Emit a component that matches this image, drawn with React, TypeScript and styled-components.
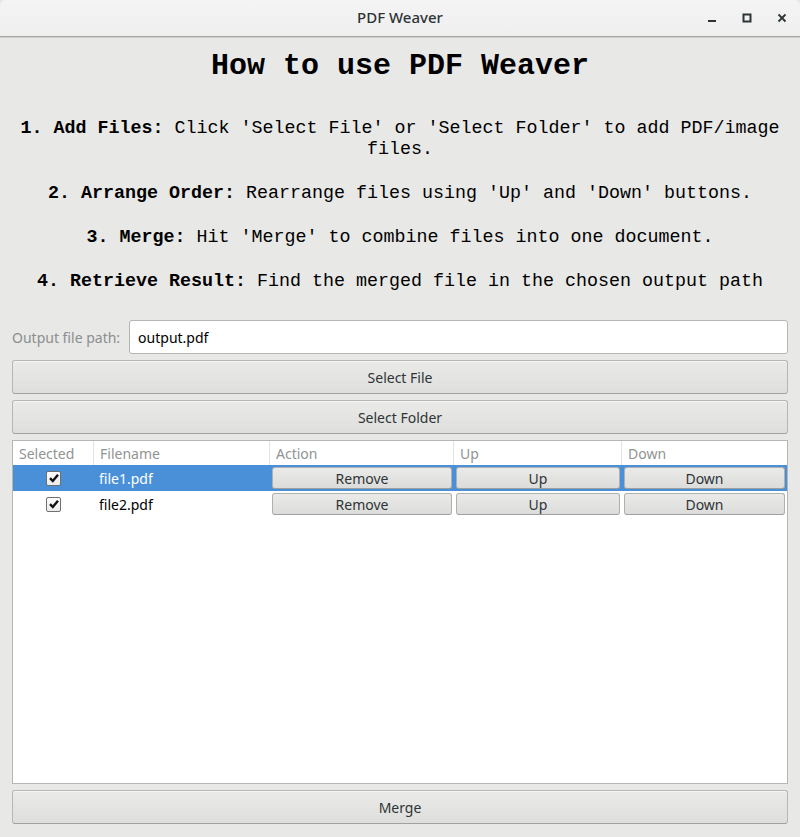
import { useState } from "react";
import styled, { createGlobalStyle } from "styled-components";

const GlobalStyle = createGlobalStyle`
  html, body {
    margin: 0;
    padding: 0;
    background: #e8e8e7;
  }
  * {
    box-sizing: border-box;
  }
`;

const MONO = `"Liberation Mono", "DejaVu Sans Mono", monospace`;
const SANS = `"Noto Sans", "Open Sans", sans-serif`;

interface FileRow {
  name: string;
  checked: boolean;
}

const steps = [
  {
    label: "1. Add Files:",
    text: "Click 'Select File' or 'Select Folder' to add PDF/image files.",
  },
  { label: "2. Arrange Order:", text: "Rearrange files using 'Up' and 'Down' buttons." },
  { label: "3. Merge:", text: "Hit 'Merge' to combine files into one document." },
  {
    label: "4. Retrieve Result:",
    text: "Find the merged file in the chosen output path",
  },
];

export default function App() {
  const [files] = useState<FileRow[]>([
    { name: "file1.pdf", checked: true },
    { name: "file2.pdf", checked: true },
  ]);
  const [selected, setSelected] = useState(0);

  return (
    <>
      <GlobalStyle />
      <Window>
        <TitleBar>
          <TitleText>PDF Weaver</TitleText>
          <Controls>
            <ControlButton aria-label="minimize">
              <svg width="10" height="10" viewBox="0 0 10 10">
                <rect x="1" y="7" width="8" height="2" fill="#2e3436" />
              </svg>
            </ControlButton>
            <ControlButton aria-label="maximize">
              <svg width="10" height="10" viewBox="0 0 10 10">
                <rect x="1.5" y="1.5" width="7" height="7" fill="none" stroke="#2e3436" strokeWidth="2" />
              </svg>
            </ControlButton>
            <ControlButton aria-label="close">
              <svg width="10" height="10" viewBox="0 0 10 10">
                <path d="M1.5 1.5 L8.5 8.5 M8.5 1.5 L1.5 8.5" stroke="#2e3436" strokeWidth="1.8" />
              </svg>
            </ControlButton>
          </Controls>
        </TitleBar>

        <Content>
          <Heading>How to use PDF Weaver</Heading>
          <Steps>
            {steps.map((s) => (
              <Step key={s.label}>
                <b>{s.label}</b> {s.text}
              </Step>
            ))}
          </Steps>

          <Form>
            <OutputRow>
              <Label>Output file path:</Label>
              <TextInput defaultValue="output.pdf" />
            </OutputRow>
            <Button>Select File</Button>
            <Button>Select Folder</Button>

            <Table>
              <HeaderRow>
                <HeadCell>Selected</HeadCell>
                <HeadCell>Filename</HeadCell>
                <HeadCell>Action</HeadCell>
                <HeadCell>Up</HeadCell>
                <HeadCell $last>Down</HeadCell>
              </HeaderRow>
              {files.map((f, i) => (
                <Row key={f.name} $active={i === selected} onClick={() => setSelected(i)}>
                  <CheckCell>
                    <CheckBox>
                      {f.checked && (
                        <svg width="12" height="12" viewBox="0 0 12 12">
                          <path
                            d="M2 6.2 L4.8 9 L10 2.8"
                            fill="none"
                            stroke="#111"
                            strokeWidth="2.4"
                          />
                        </svg>
                      )}
                    </CheckBox>
                  </CheckCell>
                  <NameCell $active={i === selected}>{f.name}</NameCell>
                  <BtnCell>
                    <RowButton>Remove</RowButton>
                  </BtnCell>
                  <BtnCell>
                    <RowButton>Up</RowButton>
                  </BtnCell>
                  <BtnCell>
                    <RowButton>Down</RowButton>
                  </BtnCell>
                </Row>
              ))}
            </Table>

            <Button>Merge</Button>
          </Form>
        </Content>
      </Window>
    </>
  );
}

const Window = styled.div`
  width: 800px;
  height: 837px;
  display: flex;
  flex-direction: column;
  background: #e8e8e7;
  font-family: ${SANS};
  overflow: hidden;
`;

const TitleBar = styled.div`
  position: relative;
  height: 37px;
  flex-shrink: 0;
  display: flex;
  align-items: center;
  justify-content: center;
  background: linear-gradient(#f4f4f4, #efefef);
  border-bottom: 1px solid #a4a4a2;
  box-shadow: 0 1px 0 #cfcfcd;
  border-radius: 6px 6px 0 0;
`;

const TitleText = styled.div`
  font-size: 15px;
  color: #2e3436;
  font-weight: 500;
  margin-top: -2px;
`;

const Controls = styled.div`
  position: absolute;
  right: 6px;
  top: 0;
  height: 36px;
  display: flex;
  align-items: center;
  gap: 11px;
`;

const ControlButton = styled.div`
  width: 24px;
  height: 24px;
  display: flex;
  align-items: center;
  justify-content: center;
`;

const Content = styled.div`
  flex: 1;
  display: flex;
  flex-direction: column;
  padding: 12px 12px 13px;
  min-height: 0;
`;

const Heading = styled.h1`
  margin: 0;
  font-family: ${MONO};
  font-size: 30px;
  font-weight: bold;
  line-height: 34px;
  text-align: center;
  color: #000;
`;

const Steps = styled.div`
  display: flex;
  flex-direction: column;
  gap: 23px;
  margin-top: 35px;
  padding: 0 4px;
`;

const Step = styled.p`
  margin: 0;
  font-family: ${MONO};
  font-size: 18.33px;
  line-height: 21px;
  text-align: center;
  color: #000;

  b {
    font-weight: bold;
  }
`;

const Form = styled.div`
  flex: 1;
  display: flex;
  flex-direction: column;
  gap: 6px;
  margin-top: 28px;
  min-height: 0;
`;

const OutputRow = styled.div`
  display: flex;
  align-items: center;
  gap: 9px;
`;

const Label = styled.label`
  font-size: 14px;
  color: #8b8e8f;
  white-space: nowrap;
`;

const TextInput = styled.input`
  flex: 1;
  height: 34px;
  padding: 0 8px;
  font-family: ${SANS};
  font-size: 14px;
  color: #000;
  background: #fff;
  border: 1px solid #b6b6b3;
  border-radius: 3px;
  outline: none;
`;

const Button = styled.button`
  height: 34px;
  width: 100%;
  flex-shrink: 0;
  font-family: ${SANS};
  font-size: 14px;
  color: #2e3436;
  background: linear-gradient(#eaeae9, #dededd);
  border: 1px solid #b6b6b3;
  border-bottom-color: #a1a19f;
  border-radius: 3px;
  box-shadow: inset 0 1px 0 rgba(255, 255, 255, 0.6);
  cursor: pointer;
`;

const Table = styled.div`
  flex: 1;
  background: #fff;
  border: 1px solid #b6b6b3;
  min-height: 0;
`;

const columns = `81px 176px 184px 168px 1fr`;

const HeaderRow = styled.div`
  display: grid;
  grid-template-columns: ${columns};
  height: 24px;
`;

const HeadCell = styled.div<{ $last?: boolean }>`
  display: flex;
  align-items: center;
  padding: 0 6px;
  font-size: 14px;
  color: #919494;
  border-right: ${(p) => (p.$last ? "none" : "1px solid #e3e3e1")};
`;

const Row = styled.div<{ $active: boolean }>`
  display: grid;
  grid-template-columns: ${columns};
  height: 26px;
  background: ${(p) => (p.$active ? "#4a90d9" : "#fff")};
`;

const CheckCell = styled.div`
  display: flex;
  align-items: center;
  justify-content: center;
`;

const CheckBox = styled.span`
  width: 15px;
  height: 15px;
  display: flex;
  align-items: center;
  justify-content: center;
  background: linear-gradient(#fdfdfd, #ececec);
  border: 1px solid #6e7071;
  border-radius: 2px;
`;

const NameCell = styled.div<{ $active: boolean }>`
  display: flex;
  align-items: center;
  padding: 0 5px;
  font-size: 14px;
  color: ${(p) => (p.$active ? "#fff" : "#000")};
`;

const BtnCell = styled.div`
  display: flex;
  padding: 2px;
`;

const RowButton = styled.button`
  flex: 1;
  font-family: ${SANS};
  font-size: 14px;
  color: #2e3436;
  padding: 0;
  background: linear-gradient(#eaeae9, #dcdcdb);
  border: 1px solid #b0b0ae;
  border-bottom-color: #9f9f9d;
  border-radius: 3px;
  cursor: pointer;
`;
